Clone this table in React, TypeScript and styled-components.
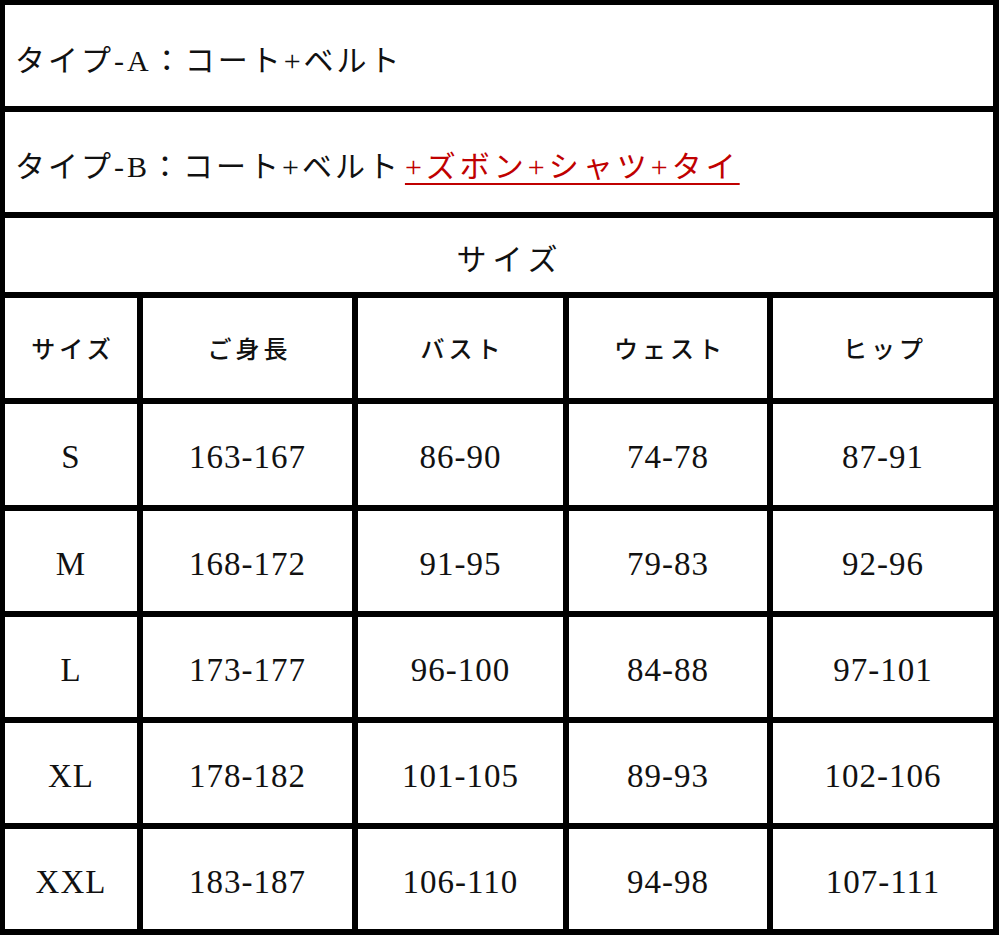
import React from "react";
import styled, { createGlobalStyle } from "styled-components";

const Global = createGlobalStyle`
  html, body { margin: 0; padding: 0; background: #fff; }
  body { width: 1000px; height: 936px; overflow: hidden; }
`;

const Table = styled.div`
  display: grid;
  width: 999px;
  box-sizing: border-box;
  padding: 5px 6px 6px 5px;
  gap: 6px;
  background: #000;
  grid-template-columns: 132px 209px 205px 198px 220px;
  grid-template-rows: 101px 100px 74px 100px 101px 100px 100px 100px 100px;
`;

const TitleCell = styled.div`
  grid-column: 1 / -1;
  background: #fff;
  display: flex;
  align-items: center;
  padding-left: 10px;
  padding-top: 4px;
  font-family: "Liberation Serif", "Noto Sans CJK JP", serif;
  font-size: 30px;
  letter-spacing: 3px;
  color: #111;
  white-space: nowrap;
`;

const Extra = styled.span`
  color: #c00000;
  text-decoration: underline;
  text-decoration-thickness: 2px;
  text-underline-offset: 6px;
  letter-spacing: 4px;
  margin-left: 4px;
`;

const SectionCell = styled.div`
  grid-column: 1 / -1;
  background: #fff;
  display: flex;
  align-items: center;
  justify-content: center;
  padding-left: 22px;
  padding-top: 4px;
  font-family: "Noto Sans CJK JP", sans-serif;
  font-size: 30px;
  letter-spacing: 6px;
  color: #111;
`;

const HeadCell = styled.div`
  background: #fff;
  display: flex;
  align-items: center;
  justify-content: center;
  padding-bottom: 2px;
  font-family: "Noto Sans CJK JP", sans-serif;
  font-weight: 500;
  font-size: 24px;
  letter-spacing: 4px;
  padding-left: 4px;
  color: #111;
`;

const DataCell = styled.div`
  background: #fff;
  display: flex;
  align-items: center;
  justify-content: center;
  padding-top: 6px;
  font-family: "Liberation Serif", serif;
  font-size: 33px;
  letter-spacing: 1px;
  color: #111;
`;

const headers = ["サイズ", "ご身長", "バスト", "ウェスト", "ヒップ"];
const rows = [
  ["S", "163-167", "86-90", "74-78", "87-91"],
  ["M", "168-172", "91-95", "79-83", "92-96"],
  ["L", "173-177", "96-100", "84-88", "97-101"],
  ["XL", "178-182", "101-105", "89-93", "102-106"],
  ["XXL", "183-187", "106-110", "94-98", "107-111"],
];

export default function App() {
  return (
    <>
      <Global />
      <Table>
        <TitleCell>タイプ-A：コート+ベルト</TitleCell>
        <TitleCell>
          タイプ-B：コート+ベルト<Extra>+ズボン+シャツ+タイ</Extra>
        </TitleCell>
        <SectionCell>サイズ</SectionCell>
        {headers.map((h) => (
          <HeadCell key={h}>{h}</HeadCell>
        ))}
        {rows.map((r) =>
          r.map((v, i) => <DataCell key={r[0] + i}>{v}</DataCell>)
        )}
      </Table>
    </>
  );
}
